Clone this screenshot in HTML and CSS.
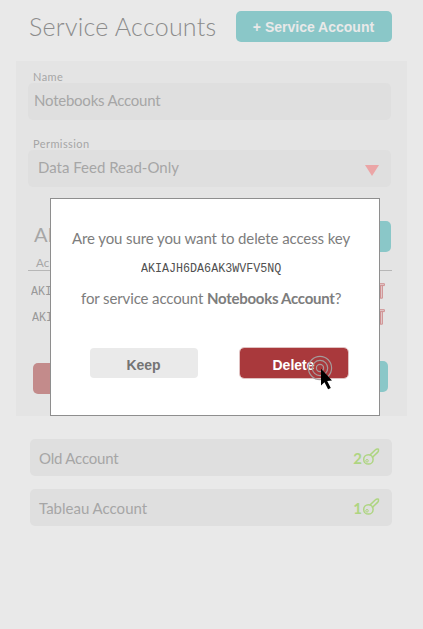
FILE: index.html
```html
<!DOCTYPE html>
<html lang="en">
<head>
<meta charset="utf-8">
<title>Service Accounts</title>
<link rel="stylesheet" href="styles.css">
</head>
<body>
<svg width="0" height="0" class="defs" aria-hidden="true">
  <symbol id="key" viewBox="0 0 18 18">
    <path d="M7.6 7.4 13.2 2Q14.6 .8 16.4 1.2Q16.8 3.2 15.6 4.4L10 9.8"/>
    <circle cx="6.4" cy="11.4" r="4.7"/>
    <circle class="dot" cx="5" cy="12.8" r="1.3"/>
  </symbol>
  <symbol id="trash" viewBox="0 0 14 16">
    <path d="M.6.7H13.4V2.6H.6ZM2.3 2.6V15.2H11.4V2.6M9.5 2.8V15"/>
  </symbol>
</svg>
<main class="page">
  <header class="top">
    <h1>Service Accounts</h1>
    <button class="btn teal">+ Service Account</button>
  </header>
  <section class="card">
    <label>Name</label>
    <div class="field"><span class="t-name">Notebooks Account</span></div>
    <label class="perm">Permission</label>
    <div class="field select"><span class="t-data">Data Feed Read-Only</span><i class="caret"></i></div>
    <div class="keys-head"><h2>API</h2><span class="btn teal"></span></div>
    <div class="col">Ac</div>
    <div class="key-row"><code>AKIA</code><svg><use href="#trash"/></svg></div>
    <div class="key-row second"><code>AKIA</code><svg><use href="#trash"/></svg></div>
    <div class="actions"><span class="btn red"></span><span class="btn teal"></span></div>
  </section>
  <section class="accounts">
    <div class="account"><span class="t-old">Old Account</span><b>2</b><svg><use href="#key"/></svg></div>
    <div class="account"><span class="t-tab">Tableau Account</span><b>1</b><svg><use href="#key"/></svg></div>
  </section>
</main>
<div class="dialog" role="dialog">
  <p class="question">Are you sure you want to delete access key</p>
  <code class="key-id">AKIAJH6DA6AK3WVFV5NQ</code>
  <p class="target">for service account <strong>Notebooks Account</strong>?</p>
  <div class="choices">
    <button class="keep">Keep</button>
    <button class="delete">Delete</button>
  </div>
</div>
<svg class="cursor" viewBox="0 0 34 38" aria-hidden="true">
  <g fill="none" stroke="#a59c9c" stroke-width="1.2"><circle cx="14" cy="14" r="3.6"/><circle cx="14" cy="14" r="7.7"/><circle cx="14" cy="14" r="11.6"/></g>
  <path d="M15 14.8V31.5L18.5 28.3 22.1 35.3 24.8 34 21.2 27 26 26.4Z"/>
</svg>
</body>
</html>
```
FILE: styles.css
```css
* { box-sizing: border-box; }
body {
  margin: 0;
  height: 629px;
  overflow: hidden;
  position: relative;
  background: #e9e9e9;
  color: #a6a6a6;
  font: 15px/20px Lato, "Open Sans", sans-serif;
  white-space: nowrap;
}
.defs { position: absolute; }
h1, h2, p { margin: 0; font-weight: 400; }
.page { padding: 11px 16px 0; }
.top {
  display: flex;
  justify-content: space-between;
  height: 50px;
  padding: 0 15px 0 13px;
}
h1 {
  color: #8c8c8c;
  font-size: 25px;
  font-weight: 300;
  line-height: 30px;
  letter-spacing: .25px;
}
.btn {
  display: block;
  height: 31px;
  border: 0;
  border-radius: 5px;
  padding: 0;
}
.teal { background: #8ac7c8; }
.red { background: #c38b8b; }
.top .btn {
  width: 156px;
  padding: 1px 1px 0 0;
  color: #e9e9e9;
  font: bold 14px/30px "Liberation Sans", sans-serif;
}
.card {
  height: 355px;
  padding: 9px 16px 0 12px;
  background: #e4e4e4;
}
label {
  display: block;
  height: 13px;
  padding-left: 5px;
  font-size: 11px;
  line-height: 14px;
  letter-spacing: .42px;
}
.field {
  height: 37px;
  padding-left: 6px;
  border-radius: 5px;
  background: #dfdfdf;
  line-height: 34px;
}
.t-name { letter-spacing: -.23px; }
.t-old { letter-spacing: -.2px; }
label.perm { margin-top: 17px; }
.select {
  display: flex;
  justify-content: space-between;
  padding: 0 12px 0 10px;
}
.caret {
  width: 14px;
  height: 11px;
  margin-top: 15px;
  background: #eba5a6;
  clip-path: polygon(0 0, 100% 0, 50% 100%);
}
.keys-head {
  display: flex;
  justify-content: space-between;
  height: 35px;
  margin-top: 34px;
  padding-left: 6px;
}
h2 { font-size: 20px; line-height: 27px; }
.keys-head .btn { width: 60px; }
.col {
  width: 364px;
  height: 15px;
  padding-left: 8px;
  border-bottom: 1px solid #b7b7b7;
  font-size: 11.5px;
  line-height: 14px;
}
code { font: 11.7px/16px "Liberation Mono", monospace; }
.key-row {
  display: flex;
  justify-content: space-between;
  height: 38px;
  padding: 12px 6px 0 3px;
}
.key-row code { margin-top: 1px; color: #999; transform: scaleY(1.16); }
.key-row svg { width: 14px; height: 16px; fill: #e4cdce; stroke: #cf9192; flex: none; }
.second { height: 27px; margin-top: -12px; padding-left: 4px; }
.second code { margin-top: 0; }
.actions {
  display: flex;
  justify-content: space-between;
  margin-top: 37px;
  padding: 0 3px 0 5px;
}
.actions .btn { width: 80px; }
.actions .red { margin-top: 2px; }
.accounts {
  display: grid;
  gap: 13px;
  padding: 23px 15px 0 14px;
}
.account {
  display: flex;
  height: 37px;
  padding: 0 12px 0 9px;
  border-radius: 5px;
  background: #dfdfdf;
  line-height: 38px;
}
.account b { margin-left: auto; color: #aed581; font-size: 15px; }
.account svg { width: 18px; height: 18px; margin-top: 9px; fill: none; stroke: #aed581; stroke-width: 1.5; }
.account .dot, .dot { stroke-width: 1; }
.dialog {
  position: absolute;
  left: 50px;
  top: 198px;
  width: 330px;
  height: 218px;
  padding-top: 29px;
  border: 1px solid #8e8e8e;
  background: #fff;
  color: #7d7d7d;
}
.question { padding-left: 21px; letter-spacing: -.1px; }
.key-id { display: block; padding-left: 90px; margin-top: 12px; line-height: 18px; color: #505050; transform: scaleY(1.16); }
.target { padding-left: 30px; margin-top: 10px; letter-spacing: -.12px; }
.target strong { font-weight: 700; letter-spacing: -.27px; }
.choices {
  display: flex;
  gap: 42px;
  margin-top: 40px;
  padding-left: 39px;
}
.choices button {
  width: 108px;
  height: 30px;
  padding: 2px 1px 0 0;
  border: 0;
  border-radius: 4px;
  background: #eaeaea;
  color: #747474;
  font: bold 14px/30px "Liberation Sans", sans-serif;
}
.choices .delete { background: #a9393c; color: #fff; outline: 1px solid #e0c2c2; }
.cursor { position: absolute; left: 306px; top: 354px; width: 34px; height: 38px; }
```
